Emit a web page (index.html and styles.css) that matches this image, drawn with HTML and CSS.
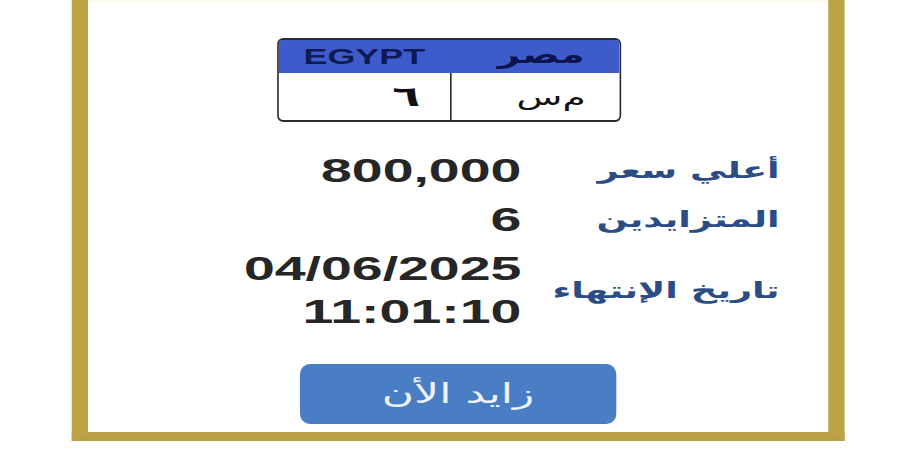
FILE: index.html
```html
<!DOCTYPE html>
<html lang="ar">
<head>
<meta charset="utf-8">
<title>مزاد لوحة</title>
<link rel="stylesheet" href="styles.css">
</head>
<body>
<div class="stage">
  <div class="frame">
    <div class="plate">
      <div class="plate-head">
        <span class="cell en">EGYPT</span>
        <span class="cell ar">مصر</span>
      </div>
      <div class="plate-body">
        <span class="cell num">٦</span>
        <span class="cell letters">م&zwnj;س</span>
      </div>
    </div>
    <div class="info">
      <div class="val">800,000</div>
      <div class="lbl">أعلي سعر</div>
      <div class="val">6</div>
      <div class="lbl">المتزايدين</div>
      <div class="val dt">04/06/2025<br>11:01:10</div>
      <div class="lbl">تاريخ الإنتهاء</div>
    </div>
    <button class="bid">زايد الأن</button>
  </div>
</div>
</body>
</html>
```
FILE: styles.css
```css
html, body {
  margin: 0;
  background: #ffffff;
  overflow: hidden;
}

.stage {
  width: 552px;
  height: 450px;
  transform: scaleX(1.6304);
  transform-origin: 0 0;
}

.frame {
  margin-left: 44.2px;
  width: 453.4px;
  height: 432px;
  border-left: 10.4px solid #bca344;
  border-right: 10.4px solid #bca344;
  border-bottom: 9px solid #b9a046;
  background: #ffffff;
  box-shadow: inset 0 3px 2px -1px #fcf8e6;
  overflow: hidden;
}

.plate {
  box-sizing: border-box;
  margin: 38px 0 0 116px;
  width: 211px;
  height: 84px;
  border-style: solid;
  border-color: #2b2b2b;
  border-width: 2px 1.3px;
  border-radius: 3.7px / 6px;
  overflow: hidden;
  background: #ffffff;
}

.plate-head {
  height: 33px;
  background: #3e5bcc;
  display: grid;
  grid-template-columns: 1fr 1fr;
  align-items: center;
}

.plate-body {
  height: 47px;
  display: grid;
  grid-template-columns: 1fr 1fr;
}

.cell {
  display: flex;
  align-items: center;
  height: 100%;
}

.en {
  justify-content: center;
  font-family: "Liberation Sans", Arial, sans-serif;
  font-weight: bold;
  font-size: 22px;
  color: #0e1a52;
}

.ar {
  justify-content: center;
  padding-left: 8px;
  padding-bottom: 3px;
  box-sizing: border-box;
  font-family: "DejaVu Sans", sans-serif;
  font-weight: bold;
  font-size: 24px;
  color: #0c1450;
}

.num {
  justify-content: flex-end;
  padding-right: 18px;
  font-family: "DejaVu Sans", sans-serif;
  font-weight: bold;
  font-size: 28px;
  color: #111111;
}

.letters {
  justify-content: flex-end;
  padding-right: 21px;
  border-left: 1.3px solid #2b2b2b;
  font-family: "DejaVu Sans", sans-serif;
  font-size: 23px;
  color: #111111;
}

.info {
  margin-top: 28px;
  display: grid;
  grid-template-columns: 265.6px 158.4px;
  grid-template-rows: 40px 40px 86px;
  row-gap: 8.5px;
}

.val {
  text-align: right;
  font-family: "Liberation Sans", Arial, sans-serif;
  font-weight: bold;
  font-size: 34px;
  line-height: 40px;
  color: #262626;
}

.val.dt {
  line-height: 43px;
}

.lbl {
  align-self: center;
  text-align: right;
  font-family: "DejaVu Sans", sans-serif;
  font-weight: bold;
  font-size: 22.5px;
  color: #2b4c84;
  direction: rtl;
  white-space: nowrap;
}

.bid {
  display: block;
  margin: 30.5px 0 0 129.5px;
  width: 194.5px;
  height: 60px;
  padding: 0;
  border: none;
  border-radius: 6px / 10px;
  background: #4a7ec4;
  color: #eef3fb;
  font-family: "DejaVu Sans", sans-serif;
  font-size: 27px;
  direction: rtl;
}
```
